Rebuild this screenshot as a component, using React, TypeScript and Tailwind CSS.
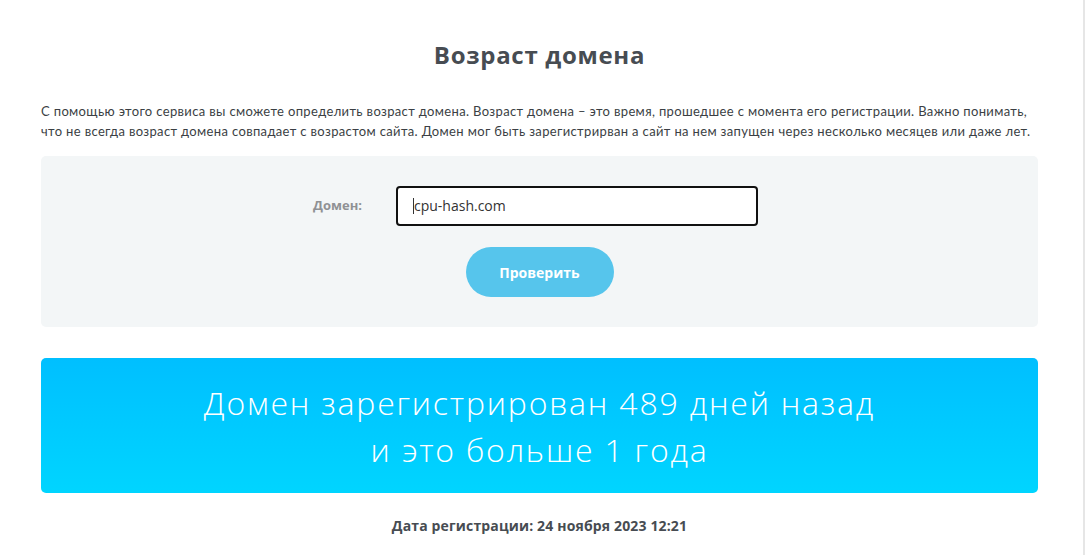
import React from "react";

export default function App() {
  return (
    <div className="w-[1085px] h-[555px] bg-white overflow-hidden flex font-['Open_Sans',sans-serif]">
      <div className="w-[1083px] pl-[41px] pr-[45px] flex flex-col">
        <h1 className="mt-[40px] h-[30px] text-center text-[24px] leading-[30px] font-bold tracking-[0.7px] text-[#474c52]">
          Возраст домена
        </h1>
        <p className="mt-[31px] text-[13px] leading-[20px] tracking-[0.35px] text-[#3b3f44] font-['Lato','Open_Sans',sans-serif]">
          С помощью этого сервиса вы сможете определить возраст домена. Возраст домена – это время, прошедшее с момента его регистрации. Важно понимать, что не всегда возраст домена совпадает с возрастом сайта. Домен мог быть зарегистрирван а сайт на нем запущен через несколько месяцев или даже лет.
        </p>
        <div className="mt-[15px] h-[171px] rounded-[5px] bg-[#f3f6f7] flex flex-col pt-[30px]">
          <div className="flex items-center">
            <label className="w-[355px] text-right pr-[34px] text-[13px] font-bold text-[#8f9194]">
              Домен:
            </label>
            <div className="w-[362px] h-[40px] rounded-[4px] border-2 border-[#111] bg-white flex items-center pl-[15px]">
              <span className="text-[14px] text-[#333] border-l border-[#333] leading-[16px]">
                cpu-hash.com
              </span>
            </div>
          </div>
          <button className="mt-[21px] self-center w-[148px] h-[50px] rounded-full bg-[#56c5ec] text-white text-[14px] font-bold">
            Проверить
          </button>
        </div>
        <div className="mt-[31px] h-[135px] rounded-[5px] bg-gradient-to-b from-[#00bfff] to-[#00d5ff] flex flex-col items-center justify-center text-white text-[32px] leading-[47px] font-light tracking-[1.8px]">
          <div>Домен зарегистрирован 489 дней назад</div>
          <div>и это больше 1 года</div>
        </div>
        <div className="mt-[22px] text-center text-[14px] font-bold tracking-[0.15px] text-[#474c52]">
          Дата регистрации: 24 ноября 2023 12:21
        </div>
      </div>
      <div className="w-[2px] h-full bg-[#e6e6e6]" />
    </div>
  );
}
